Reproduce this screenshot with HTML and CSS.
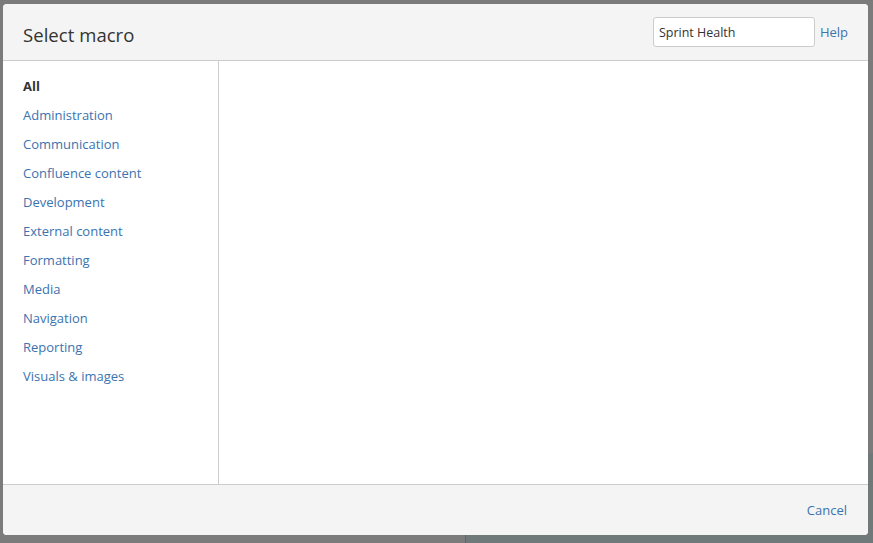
FILE: index.html
```html
<!DOCTYPE html>
<html>
<head>
<meta charset="utf-8">
<link rel="stylesheet" href="styles.css">
</head>
<body>
<div class="backdrop">
  <div class="bd-top"></div>
  <div class="bd-bottom">
    <div class="bd-left"></div>
    <div class="bd-right"></div>
  </div>
</div>
<div class="dialog">
  <header class="dlg-header">
    <h1 class="dlg-title">Select macro</h1>
    <div class="dlg-tools">
      <input class="search" type="text" value="Sprint Health">
      <a class="link help" href="#">Help</a>
    </div>
  </header>
  <div class="dlg-body">
    <nav class="cats">
      <ul>
        <li class="cat active">All</li>
        <li class="cat"><a class="link" href="#">Administration</a></li>
        <li class="cat"><a class="link" href="#">Communication</a></li>
        <li class="cat"><a class="link" href="#">Confluence content</a></li>
        <li class="cat"><a class="link" href="#">Development</a></li>
        <li class="cat"><a class="link" href="#">External content</a></li>
        <li class="cat"><a class="link" href="#">Formatting</a></li>
        <li class="cat"><a class="link" href="#">Media</a></li>
        <li class="cat"><a class="link" href="#">Navigation</a></li>
        <li class="cat"><a class="link" href="#">Reporting</a></li>
        <li class="cat"><a class="link" href="#">Visuals &amp; images</a></li>
      </ul>
    </nav>
    <main class="results"></main>
  </div>
  <footer class="dlg-footer">
    <a class="link cancel" href="#">Cancel</a>
  </footer>
</div>
</body>
</html>
```

FILE: styles.css
```css
html, body {
  margin: 0;
  padding: 0;
  width: 873px;
  height: 543px;
  overflow: hidden;
  font-family: "Open Sans", "Noto Sans", sans-serif;
}

.backdrop {
  width: 873px;
  height: 543px;
  display: flex;
  flex-direction: column;
  background: #7b7b7b;
}

.bd-top {
  flex: 1;
}

.bd-bottom {
  height: 90px;
  display: flex;
}

.bd-left {
  width: 465px;
}

.bd-right {
  flex: 1;
  background: #707979;
  border-left: 1px solid #5d6565;
}

.dialog {
  position: absolute;
  left: 3px;
  top: 4px;
  width: 865px;
  height: 531px;
  background: #fff;
  border-radius: 4px;
  overflow: hidden;
  display: flex;
  flex-direction: column;
}

.dlg-header {
  height: 56px;
  background: #f4f4f4;
  border-bottom: 1px solid #cccccc;
  display: flex;
  align-items: center;
  justify-content: space-between;
  padding: 0 20px;
}

.dlg-title {
  margin: 0;
  font-weight: 400;
  font-size: 18.5px;
  color: #333;
  letter-spacing: 0.05px;
  padding-top: 5px;
}

.dlg-tools {
  display: flex;
  align-items: center;
  gap: 5px;
  margin-bottom: 1px;
}

.search {
  width: 162px;
  height: 30px;
  box-sizing: border-box;
  border: 1px solid #cccccc;
  border-radius: 3px;
  background: #fff;
  padding: 2px 5px 0 5px;
  font-family: "Open Sans", "Noto Sans", sans-serif;
  font-size: 12.5px;
  color: #333;
  outline: none;
}

.link {
  color: #3b73af;
  text-decoration: none;
  font-size: 13px;
}

.dlg-body {
  flex: 1;
  display: flex;
  min-height: 0;
}

.cats {
  width: 216px;
  border-right: 1px solid #cccccc;
  padding: 15px 0 0 20px;
  box-sizing: border-box;
}

.cats ul {
  list-style: none;
  margin: 0;
  padding: 0;
}

.cat {
  height: 29px;
  line-height: 20px;
  font-size: 13px;
}

.cat.active {
  font-weight: 700;
  color: #333;
}

.results {
  flex: 1;
}

.dlg-footer {
  height: 50px;
  background: #f4f4f4;
  border-top: 1px solid #cccccc;
  display: flex;
  align-items: center;
  justify-content: flex-end;
  padding: 0 20px 0 0;
}

.cancel {
  margin-right: 1px;
}
```
